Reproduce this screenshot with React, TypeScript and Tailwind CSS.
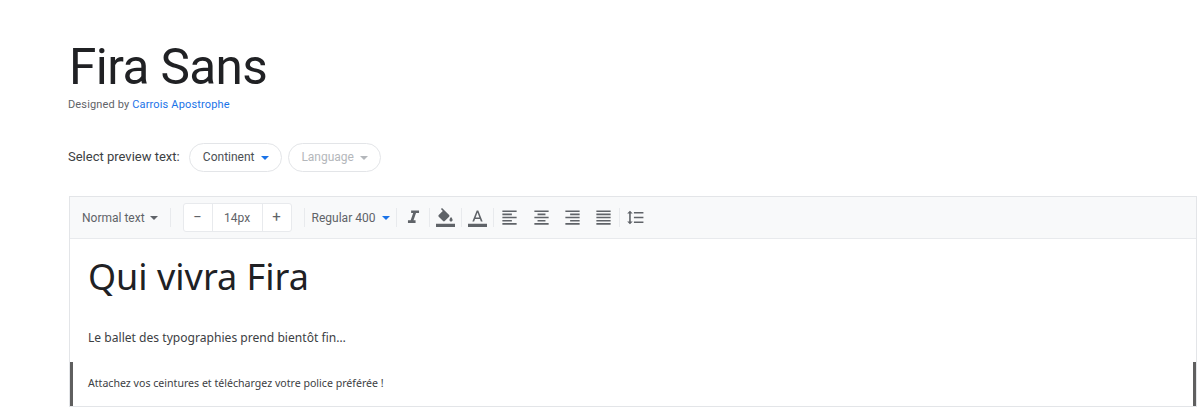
const ICONS = {
  italic: 'M9 3v3.4h2.6L8.4 15.6H5V19h9.6v-3.4H12l3.2-9.2H19V3z',
  fill: 'M16.56 8.94L7.62 0 6.21 1.41l2.38 2.38-5.15 5.15c-.59.59-.59 1.54 0 2.12l5.5 5.5c.29.29.68.44 1.06.44s.77-.15 1.06-.44l5.5-5.5c.59-.58.59-1.53 0-2.12zM19 11.5s-2 2.17-2 3.5c0 1.1.9 2 2 2s2-.9 2-2c0-1.33-2-3.5-2-3.5zM0 20h24v4H0z',
  text: 'M11 3L5.5 17h2.25l1.12-3h6.25l1.12 3h2.25L13 3h-2zm-1.38 9L12 5.67 14.38 12H9.62zM0 20h24v4H0z',
  left: 'M15 15H3v2h12v-2zm0-8H3v2h12V7zM3 13h18v-2H3v2zm0 8h18v-2H3v2zM3 3v2h18V3H3z',
  center: 'M7 15v2h10v-2H7zm-4 6h18v-2H3v2zm0-8h18v-2H3v2zm4-6v2h10V7H7zM3 3v2h18V3H3z',
  right: 'M3 21h18v-2H3v2zm6-4h12v-2H9v2zm-6-4h18v-2H3v2zm6-4h12V7H9v2zM3 3v2h18V3H3z',
  justify: 'M3 21h18v-2H3v2zm0-4h18v-2H3v2zm0-4h18v-2H3v2zm0-4h18V7H3v2zm0-6v2h18V3H3z',
  spacing: 'M6 7h2.5L5 3.5 1.5 7H4v10H1.5L5 20.5 8.5 17H6V7zm4-2v2h12V5H10zm0 14h12v-2H10v2zm0-6h12v-2H10v2z',
}

const uiFont = "font-['Roboto','Liberation_Sans',sans-serif]"
const previewFont = "font-['Noto_Sans','Open_Sans',sans-serif]"

function Icon({ d }: { d: string }) {
  return (
    <svg viewBox="0 0 24 24" className="w-[19px] h-[19px] fill-[#5f6368]">
      <path d={d} />
    </svg>
  )
}

function Caret({ className }: { className: string }) {
  return <span className={`w-0 h-0 border-x-[4px] border-x-transparent border-t-[4px] ${className}`} />
}

function Divider() {
  return <span className="w-px h-[19px] bg-[#e8eaed]" />
}

function ToolButton({ d }: { d: string }) {
  return (
    <span className="w-[31.25px] h-[24px] flex items-center justify-center">
      <Icon d={d} />
    </span>
  )
}

function Chip({ label, muted }: { label: string; muted?: boolean }) {
  return (
    <span className={`h-[29px] w-[93px] rounded-full border border-[#e3e5e8] flex items-center justify-center gap-[6px] text-[12px] ${muted ? 'text-[#b4b7bb]' : 'text-[#4b4f54]'}`}>
      <span className="mb-px ml-px">{label}</span>
      <Caret className={muted ? 'border-t-[#b4b7bb]' : 'border-t-[#1a73e8]'} />
    </span>
  )
}

export default function App() {
  return (
    <div className={`w-[1200px] h-[411px] overflow-hidden bg-white pl-[69px] pr-[3px] pt-[39px] ${uiFont}`}>
      <h1 className="text-[49.5px] leading-[56px] text-[#202124] tracking-[-0.6px]">Fira Sans</h1>
      <p className="mt-[2px] -ml-px text-[11px] leading-[16px] tracking-[0.15px] text-[#5f6368]">
        Designed by <span className="text-[#1a73e8]">Carrois Apostrophe</span>
      </p>

      <div className="mt-[30px] -ml-px flex items-center h-[29px] text-[13px] text-[#3c4043]">
        <span className="mr-[9px] mb-[2px]">Select preview text:</span>
        <Chip label="Continent" />
        <span className="w-[6px]" />
        <Chip label="Language" muted />
      </div>

      <div className="mt-[24px] h-[211px] border border-[#e3e5e8] overflow-hidden">
        <div className="h-[42px] bg-[#f8f9fa] border-b border-[#e8eaed] flex items-center pl-[12px] text-[12px] text-[#5f6368]">
          <span>Normal text</span>
          <Caret className="ml-[5px] mr-[12px] border-t-[#5f6368]" />
          <Divider />
          <div className="ml-[12px] mr-[12px] h-[29px] w-[109px] flex items-center bg-white border border-[#e8eaed] rounded-[3px]">
            <span className="w-[29px] text-center text-[15px] border-r border-[#e8eaed] leading-[27px]">−</span>
            <span className="flex-1 text-center">14px</span>
            <span className="w-[29px] text-center text-[15px] border-l border-[#e8eaed] leading-[27px]">+</span>
          </div>
          <Divider />
          <span className="ml-[7px]">Regular 400</span>
          <Caret className="ml-[7px] mr-[6px] border-t-[#1a73e8]" />
          <Divider />
          <ToolButton d={ICONS.italic} />
          <Divider />
          <ToolButton d={ICONS.fill} />
          <Divider />
          <ToolButton d={ICONS.text} />
          <Divider />
          <ToolButton d={ICONS.left} />
          <ToolButton d={ICONS.center} />
          <ToolButton d={ICONS.right} />
          <ToolButton d={ICONS.justify} />
          <Divider />
          <ToolButton d={ICONS.spacing} />
        </div>

        <div className={`text-[#202124] ${previewFont}`}>
          <h2 className="pl-[18px] pt-[15px] text-[36px] leading-[46px]">Qui vivra Fira</h2>
          <p className="pl-[18px] mt-[30px] text-[12.1px] leading-[16px] text-[#3c4043]">Le ballet des typographies prend bientôt fin…</p>
          <blockquote className="mt-[16px] h-[44px] border-x-[3px] border-x-[#5f5f5f] pl-[15px] flex items-center text-[10.6px] text-[#3c4043]">
            Attachez vos ceintures et téléchargez votre police préférée !
          </blockquote>
        </div>
      </div>
    </div>
  )
}
